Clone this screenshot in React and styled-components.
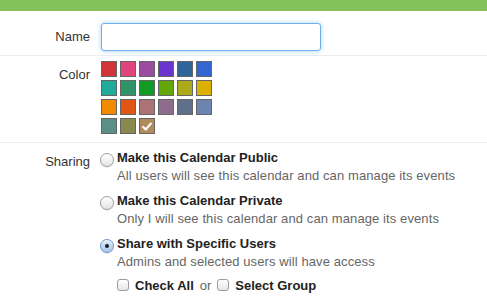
import React from "react";
import styled, { createGlobalStyle } from "styled-components";

const Global = createGlobalStyle`
  html, body { margin: 0; padding: 0; background: #fff; }
  body { font-family: "Liberation Sans", Arial, sans-serif; font-size: 13px; color: #333; }
`;

const TopBar = styled.div`
  height: 11px;
  background: #84c05c;
`;

const FieldRow = styled.div`
  display: grid;
  grid-template-columns: 90px 1fr;
  column-gap: 11px;
  padding: ${(p) => p.$pad};
  border-bottom: ${(p) => (p.$last ? "none" : "1px solid #ececec")};
`;

const Label = styled.div`
  text-align: right;
  line-height: ${(p) => p.$lh || "16px"};
  margin-top: ${(p) => p.$mt || "0"};
  color: #333;
`;

const TextInput = styled.input`
  box-sizing: border-box;
  width: 220px;
  height: 28px;
  border: 1px solid #6fb1ee;
  border-radius: 3px;
  box-shadow: 0 0 4px rgba(82, 168, 236, 0.55);
  outline: none;
  padding: 0 6px;
  font: inherit;
`;

const SwatchGrid = styled.div`
  display: grid;
  grid-template-columns: repeat(6, 16px);
  grid-auto-rows: 16px;
  gap: 3px;
`;

const Swatch = styled.div`
  box-sizing: border-box;
  border: 1px solid #666;
  background: ${(p) => p.$c};
  display: flex;
  align-items: center;
  justify-content: center;
`;

const Options = styled.div`
  display: flex;
  flex-direction: column;
  margin-left: -1px;
`;

const Option = styled.div`
  display: grid;
  grid-template-columns: 14px 1fr;
  column-gap: 3px;
  margin-bottom: ${(p) => p.$mb || "10px"};
`;

const Radio = styled.span`
  box-sizing: border-box;
  width: 14px;
  height: 14px;
  margin-top: 3px;
  border-radius: 50%;
  border: 1px solid ${(p) => (p.$checked ? "#6b93c8" : "#a0a0a0")};
  background: ${(p) =>
    p.$checked
      ? "linear-gradient(#dbe9f8, #a9c8ec)"
      : "linear-gradient(#ffffff, #e4e4e4)"};
  box-shadow: inset 0 1px 0 rgba(255, 255, 255, 0.8), 0 0.5px 1px rgba(0, 0, 0, 0.15);
  display: flex;
  align-items: center;
  justify-content: center;
  &::after {
    content: "";
    display: ${(p) => (p.$checked ? "block" : "none")};
    width: 4px;
    height: 4px;
    border-radius: 50%;
    background: #1d1d1d;
  }
`;

const OptionTitle = styled.div`
  font-weight: bold;
  color: #222;
  line-height: 16px;
`;

const OptionDesc = styled.div`
  grid-column: 2;
  color: #666;
  line-height: 16px;
  margin-top: 1px;
  letter-spacing: 0.1px;
`;

const CheckRow = styled.div`
  display: flex;
  align-items: center;
  margin-left: 17px;
  height: 16px;
`;

const CheckBox = styled.span`
  box-sizing: border-box;
  width: 12px;
  height: 12px;
  border: 1px solid #9c9c9c;
  border-radius: 3px;
  background: linear-gradient(#ffffff, #e6e6e6);
  margin-right: ${(p) => p.$mr || "6px"};
`;

const CheckText = styled.span`
  font-weight: bold;
  color: #222;
`;

const Or = styled.span`
  color: #666;
  margin: 0 6px;
`;

const colors = [
  "#d13438", "#e0457b", "#9b4ba0", "#6a35cf", "#2e6699", "#3266d0",
  "#1fac9c", "#2f9467", "#139a25", "#63a80b", "#aaaa1a", "#dcb000",
  "#f08a00", "#e05612", "#ab7373", "#8e6c8e", "#5f718a", "#6d84b0",
  "#5b8e86", "#89884f", "#b28b5d",
];

const Check = () => (
  <svg width="10" height="9" viewBox="0 0 10 9">
    <path d="M1.2 5 L3.8 7.4 L8.8 1.6" fill="none" stroke="#fff" strokeWidth="2.2" strokeLinecap="round" strokeLinejoin="round" />
  </svg>
);

const options = [
  { title: "Make this Calendar Public", desc: "All users will see this calendar and can manage its events" },
  { title: "Make this Calendar Private", desc: "Only I will see this calendar and can manage its events" },
  { title: "Share with Specific Users", desc: "Admins and selected users will have access", checked: true },
];

export default function App() {
  return (
    <>
      <Global />
      <TopBar />
      <FieldRow $pad="12px 0 4px">
        <Label $lh="28px">Name</Label>
        <div>
          <TextInput type="text" />
        </div>
      </FieldRow>
      <FieldRow $pad="5px 0 8px">
        <Label $mt="6px">Color</Label>
        <SwatchGrid>
          {colors.map((c, i) => (
            <Swatch key={i} $c={c}>
              {i === colors.length - 1 && <Check />}
            </Swatch>
          ))}
        </SwatchGrid>
      </FieldRow>
      <FieldRow $pad="7px 0 0" $last>
        <Label $mt="4px">Sharing</Label>
        <Options>
          {options.map((o, i) => (
            <Option key={i} $mb={i === options.length - 1 ? "7px" : "9px"}>
              <Radio $checked={o.checked} />
              <OptionTitle>{o.title}</OptionTitle>
              <OptionDesc>{o.desc}</OptionDesc>
            </Option>
          ))}
          <CheckRow>
            <CheckBox />
            <CheckText>Check All</CheckText>
            <Or>or</Or>
            <CheckBox />
            <CheckText>Select Group</CheckText>
          </CheckRow>
        </Options>
      </FieldRow>
    </>
  );
}
